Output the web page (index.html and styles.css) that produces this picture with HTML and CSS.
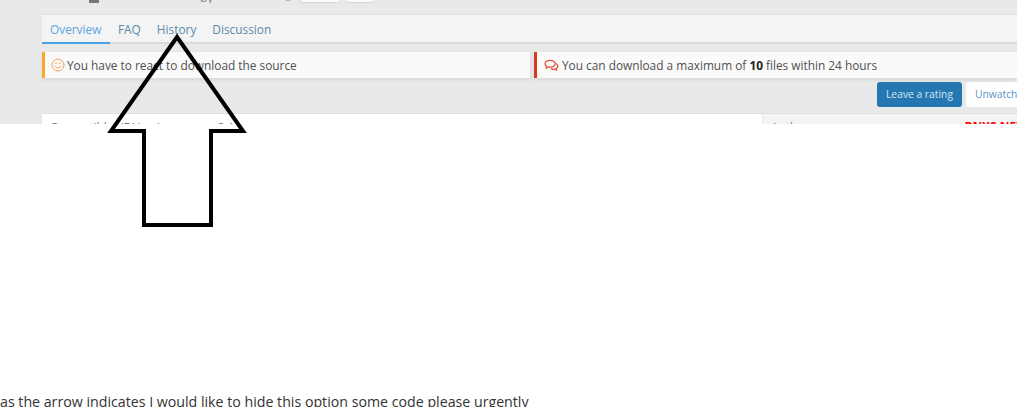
FILE: index.html
```html
<!DOCTYPE html>
<html lang="en">
<head>
  <meta charset="UTF-8" />
  <title>Hide history tab</title>
  <link rel="stylesheet" href="styles.css">
</head>
<body>
  <div class="shot">
    <div class="top-strip">
      <span class="strip-icon"></span>
      <span class="strip-error">Error 404</span>
      <span class="strip-muted">by</span>
      <span class="strip-hash">#</span>
      <span class="strip-box strip-box-wide"></span>
      <span class="strip-box strip-box-small"></span>
    </div>

    <nav class="tabs">
      <a class="tab active">Overview</a>
      <a class="tab">FAQ</a>
      <a class="tab">History</a>
      <a class="tab">Discussion</a>
    </nav>

    <div class="notices">
      <div class="notice notice-warn">
        <!-- smile -->
        <svg class="notice-icon" viewBox="0 0 14 14"><circle cx="7" cy="7" r="6"/><path d="M3.800 8.200c1.700 2.200 4.700 2.200 6.400 0M4.200 5.400c.5-.6 1.300-.6 1.800 0M8 5.400c.5-.6 1.300-.6 1.800 0"/></svg>
        <span>You have to react to download the source</span>
      </div>
      <div class="notice notice-limit">
        <!-- comments -->
        <svg class="notice-icon" viewBox="0 0 14 14"><path d="M5.800 2.200c-2.600 0-4.800 1.300-4.800 3.100 0 1 .7 1.800 1.600 2.400L2 9.400l2.200-1c.5.1 1 .2 1.600.2 2.600 0 4.600-1.400 4.600-3.200S8.400 2.200 5.800 2.200z"/><path d="M6.800 9.900c.9.6 2 .8 3.200.6l1.900.9-.5-1.600c.9-.5 1.500-1.300 1.500-2.200 0-.9-.6-1.700-1.500-2.200"/></svg>
        <span>You can download a maximum of <b>10</b> files within 24 hours</span>
      </div>
    </div>

    <div class="actions">
      <a class="btn btn-primary">Leave a rating</a>
      <a class="btn btn-plain">Unwatch</a>
    </div>

    <div class="panels">
      <div class="panel panel-main">
        <span>Compatible XF Versions</span>
        <span class="panel-value">2.1</span>
      </div>
      <div class="panel panel-side">
        <span>Author</span>
        <span class="panel-author">BNXS.NET</span>
      </div>
    </div>
  </div>

  <p class="caption">as the arrow indicates I would like to hide this option some code please urgently</p>

  <svg class="arrow" viewBox="0 0 150 200" width="150" height="200">
    <polygon points="74,4 140,98 108,98 108,192 41,192 41,98 8,98"/>
  </svg>
</body>
</html>
```

FILE: styles.css
```css
* { box-sizing: border-box; margin: 0; padding: 0; }

html, body {
  height: 407px;
  overflow: hidden;
}

body {
  position: relative;
  display: flex;
  flex-direction: column;
  justify-content: space-between;
  background: #fff;
  color: #444;
  font-family: 'Open Sans', sans-serif;
  font-size: 11.85px;
}

.shot {
  width: 1017px;
  height: 124px;
  padding-left: 42px;
  overflow: hidden;
  background: #e9e9e9;
}

/* what is left of the header above the crop */
.top-strip {
  display: flex;
  align-items: flex-end;
  height: 3px;
  margin-bottom: 11px;
  padding-left: 47px;
  overflow: hidden;
}
.strip-icon {
  flex: none;
  width: 10px;
  height: 10px;
  margin-right: 6px;
  background: #777;
}
.strip-error {
  flex: none;
  width: 95px;
  color: #f22;
  font-weight: 700;
  line-height: 14px;
  margin-bottom: 1px;
}
.strip-muted {
  flex: none;
  width: 85px;
  line-height: 14px;
  margin-bottom: -1px;
  color: #888;
}
.strip-hash {
  flex: none;
  width: 10px;
  margin-right: 5px;
  color: #666;
  line-height: 14px;
}
.strip-box {
  flex: none;
  height: 12px;
  background: #fafafa;
  border: 1px solid #d8d8d8;
  border-radius: 3px;
}
.strip-box-wide { width: 41px; margin-right: 4px; }
.strip-box-small { width: 30px; }

.tabs {
  display: flex;
  height: 30px;
  background: #f4f4f4;
  border-top: 1px solid #e1e1e1;
  border-bottom: 2px solid #dcdcdc;
}
.tab {
  height: 29px;
  padding: 5px 8px 0;
  color: #5b8aac;
  line-height: 18px;
}
.tab.active {
  width: 68px;
  margin-right: 0;
  color: #5ba5e0;
  border-bottom: 2px solid #47a3e3;
}

.notices {
  display: flex;
  gap: 4px;
  margin-top: 8px;
}
.notice {
  display: flex;
  align-items: center;
  gap: 3px;
  height: 26px;
  background: #fafafa;
  border-left: 3px solid;
  box-shadow: 0 2px 4px rgba(0,0,0,0.08);
  color: #505050;
}
.notice b { color: #222; }
.notice-warn { flex: none; width: 488px; gap: 2px; padding-left: 6px; border-color: #f7a92c; }
.notice-limit { flex: 1; padding-left: 7px; border-color: #d9391c; }
.notice-icon {
  flex: none;
  width: 14px;
  height: 14px;
  fill: none;
  stroke-width: 1;
  stroke-linecap: round;
  stroke-linejoin: round;
}
.notice-warn .notice-icon { stroke: #f5a65b; }
.notice-limit .notice-icon { width: 15px; height: 15px; stroke: #e0513a; stroke-width: 1.2; }

.actions {
  display: flex;
  justify-content: flex-end;
  gap: 4px;
  margin-top: 4px;
}
.btn {
  flex: none;
  height: 25px;
  border-radius: 3px;
  font-size: 10.3px;
  line-height: 25px;
}
.btn-primary { width: 85px; background: #2577b1; color: #d5e6f2; text-align: center; }
.btn-plain {
  width: 62px;
  margin-right: -11px;
  padding-left: 9px;
  background: #fff;
  color: #5b93c4;
}

.panels {
  display: flex;
  gap: 1px;
  height: 20px;
  margin-top: 6px;
  border-top: 1px solid #dedede;
}
.panel {
  display: flex;
  justify-content: space-between;
  padding: 5px 0 0 8px;
  color: #777;
  line-height: 16px;
}
.panel-main { flex: none; width: 720px; background: #fff; justify-content: flex-start; gap: 38px; }
.panel-side { flex: 1; background: #f4f4f4; }
.panel-author { color: #f00; font-weight: 700; margin-top: -1px; margin-right: -6px; }

.caption {
  height: 17px;
  overflow: hidden;
  padding-top: 1px;
  font-size: 14.2px;
  line-height: 21px;
  color: #333;
  white-space: nowrap;
}

/* drawn on top of the screenshot */
.arrow {
  position: absolute;
  left: 103px;
  top: 33px;
  fill: none;
  stroke: #000;
  stroke-width: 4;
  stroke-linejoin: miter;
}
```
